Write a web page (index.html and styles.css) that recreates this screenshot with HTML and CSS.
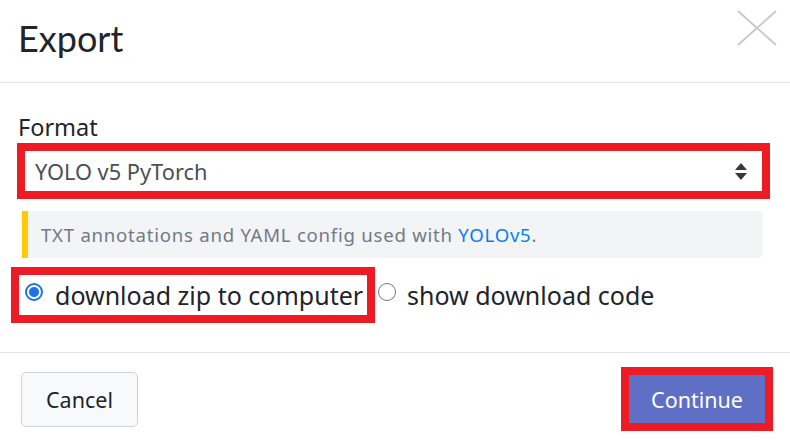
FILE: index.html
```html
<!DOCTYPE html>
<html>
<head>
<meta charset="utf-8">
<link rel="stylesheet" href="styles.css">
</head>
<body>
<div class="modal">
  <div class="modal-header">
    <h4 class="title">Export</h4>
    <button class="close" aria-label="Close">
      <svg width="40" height="36" viewBox="0 0 40 36"><path d="M1 1 L39 35 M39 1 L1 35" stroke="#c9c9c9" stroke-width="2" fill="none"/></svg>
    </button>
  </div>
  <div class="modal-body">
    <label class="label">Format</label>
    <div class="hl select-hl">
      <div class="select">
        <span class="select-text">YOLO v5 PyTorch</span>
        <svg class="arrows" width="12" height="17" viewBox="0 0 12 17"><path d="M6 0 L12 7 L0 7 Z M0 10 L12 10 L6 17 Z" fill="#343a40"/></svg>
      </div>
    </div>
    <div class="info">TXT annotations and YAML config used with <a class="link">YOLOv5</a>.</div>
    <div class="options">
      <div class="hl radio-hl">
        <span class="radio on"></span>
        <span class="opt-text">download zip to computer</span>
      </div>
      <span class="radio off"></span>
      <span class="opt-text">show download code</span>
    </div>
  </div>
  <div class="modal-footer">
    <button class="btn cancel">Cancel</button>
    <div class="hl continue-hl">
      <button class="btn continue">Continue</button>
    </div>
  </div>
</div>
</body>
</html>
```
FILE: styles.css
```css
* { box-sizing: border-box; }
body {
  margin: 0;
  background: #fff;
  font-family: "Noto Sans", "Noto Sans CJK KR", sans-serif;
  color: #212529;
}
.modal { width: 790px; height: 442px; }
.modal-header {
  height: 83px;
  border-bottom: 1px solid #dee2e6;
  display: flex;
  align-items: flex-start;
  justify-content: space-between;
  padding: 0 13px 0 18px;
}
.title {
  margin: 0;
  font-family: Lato, "Noto Sans", sans-serif;
  font-weight: 400;
  font-size: 36px;
  line-height: 40px;
  padding-top: 18px;
}
.close {
  border: 0;
  background: none;
  padding: 0;
  margin-top: 10px;
}
.close svg { display: block; }
.modal-body { padding: 0; }
.label {
  display: block;
  font-size: 23.5px;
  line-height: 30px;
  padding: 29px 0 0 18px;
  height: 60px;
}
.hl { border: 8px solid #ed1c24; background: #fff; }
.select-hl { margin-left: 17px; width: 753px; height: 56px; }
.select {
  height: 40px;
  display: flex;
  align-items: center;
  justify-content: space-between;
  padding: 0 15px 0 10px;
}
.select-text { font-size: 21.8px; color: #495057; }
.arrows { display: block; }
.info {
  margin: 12px 0 0 22px;
  width: 741px;
  height: 47px;
  background: #f3f4f6;
  border-left: 6px solid #fdcb00;
  border-radius: 0 5px 5px 0;
  font-size: 18.6px;
  letter-spacing: 0.75px;
  line-height: 47px;
  padding-left: 13px;
  color: #727b83;
}
.link { color: #0a7cf6; text-decoration: none; }
.options {
  margin: 9px 0 0 11px;
  display: flex;
  align-items: center;
  height: 56px;
}
.radio-hl {
  width: 364px;
  height: 56px;
  display: flex;
  align-items: center;
  padding-left: 6px;
}
.radio {
  display: inline-block;
  width: 18px;
  height: 18px;
  border-radius: 50%;
  flex: none;
  margin-top: -6px;
}
.radio.on {
  border: 2px solid #1a73e8;
  background: radial-gradient(circle, #1a73e8 0 4.5px, #fff 5.5px);
}
.radio.off {
  border: 1px solid #767676;
  margin-left: 3px;
}
.opt-text { font-size: 25px; margin-left: 12px; white-space: nowrap; }
.radio.off + .opt-text { margin-left: 11px; }
.modal-footer {
  margin-top: 29px;
  border-top: 1px solid #dee2e6;
  height: 90px;
  display: flex;
  align-items: flex-start;
  justify-content: space-between;
  padding: 14px 17px 0 21px;
}
.btn {
  font-family: inherit;
  font-size: 21.5px;
  border-radius: 5px;
}
.cancel {
  margin-top: 5px;
  width: 117px;
  height: 55px;
  background: #f8f9fa;
  border: 1px solid #ced4da;
  color: #212529;
}
.continue-hl { width: 152px; height: 64px; }
.continue {
  width: 136px;
  height: 48px;
  border: 0;
  border-radius: 0;
  background: #5f6fc5;
  color: #fff;
  display: block;
}
```
